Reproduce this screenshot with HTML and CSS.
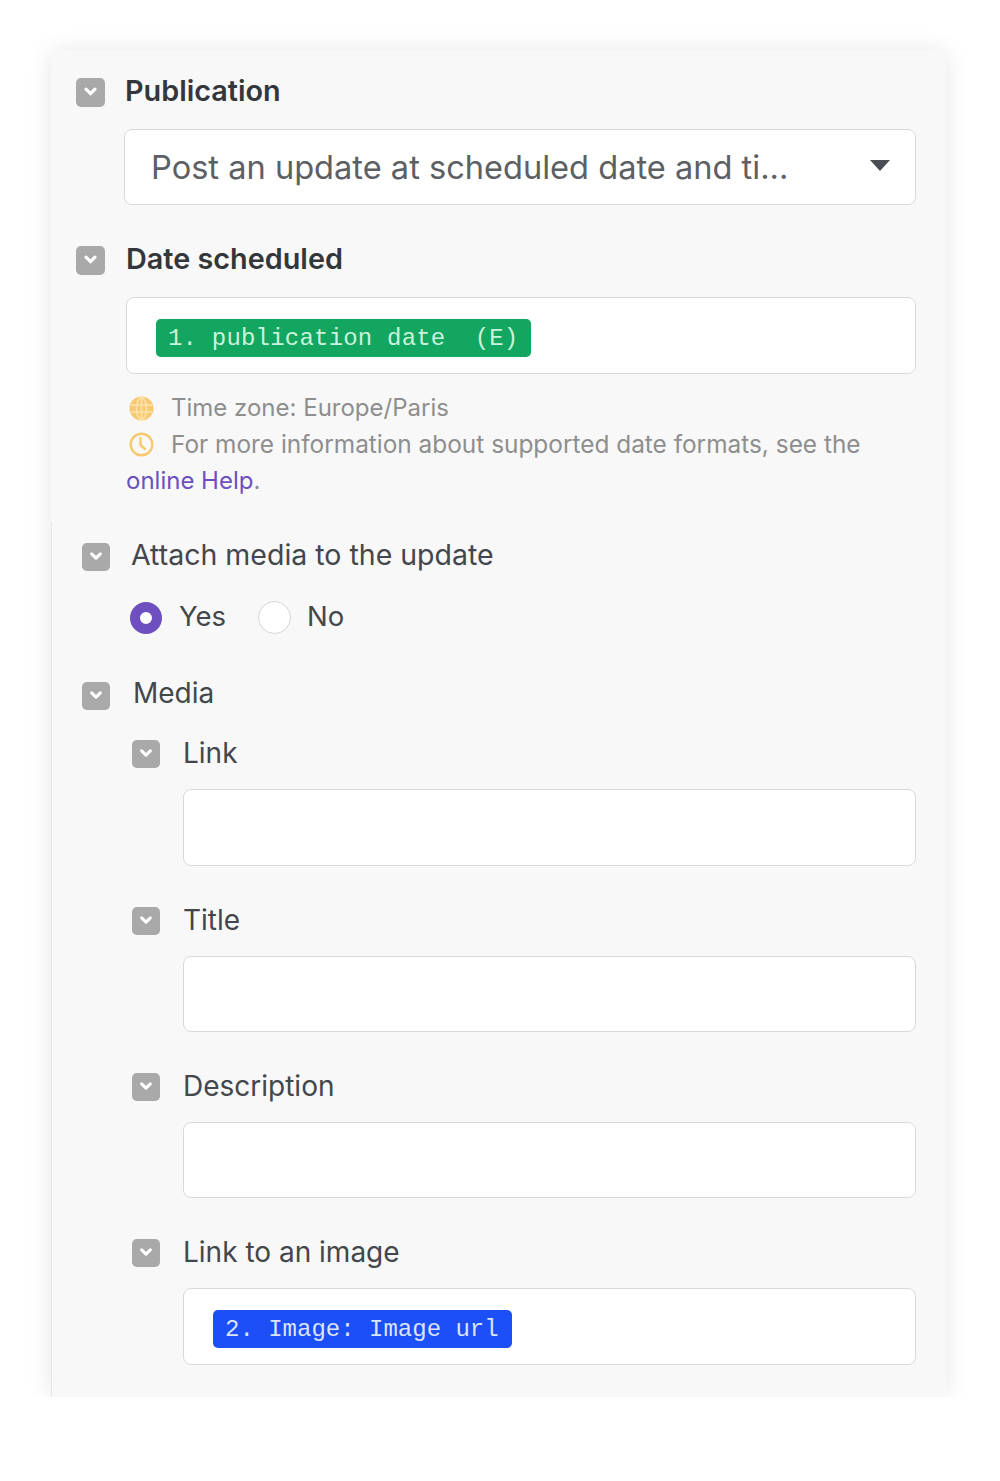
FILE: index.html
```html
<!DOCTYPE html>
<html lang="en">
<head>
    <meta charset="UTF-8">
    <title>Publication settings</title>
    <link rel="stylesheet" href="styles.css">
</head>
<body>
    <svg class="sprite" width="0" height="0">
        <symbol id="toggle" viewBox="0 0 29 29">
            <rect width="29" height="29" rx="5" fill="#a9a9a9"/>
            <path d="M10 11.2l4.5 4.5 4.5-4.5" fill="none" stroke="#fff" stroke-width="3.2" stroke-linecap="round" stroke-linejoin="round"/>
        </symbol>
    </svg>

    <div class="panel">
        <div class="panel-top">
            <div class="head">
                <svg class="toggle"><use href="#toggle"/></svg>
                <span class="label bold">Publication</span>
            </div>
            <div class="select-wrap">
                <div class="box select">
                    <span class="select-text">Post an update at scheduled date and ti...</span>
                    <span class="caret"></span>
                </div>
            </div>

            <div class="head head-date">
                <svg class="toggle"><use href="#toggle"/></svg>
                <span class="label bold">Date scheduled</span>
            </div>
            <div class="date-wrap">
                <div class="box chip-box">
                    <span class="chip chip-green">1. publication date&nbsp; (E)</span>
                </div>
                <div class="notes">
                    <div class="note note-zone">
                        <svg class="note-icon" viewBox="0 0 25 25" fill="none" stroke="#fbe3ae" stroke-width="1.6">
                            <circle cx="12.5" cy="12.5" r="12" fill="#f8c96f" stroke="none"/>
                            <ellipse cx="12.5" cy="12.5" rx="5" ry="11"/>
                            <path d="M2 9h21M2 16h21M12.5 1.5v22"/>
                        </svg>
                        <span>Time zone: Europe/Paris</span>
                    </div>
                    <div class="note note-formats">
                        <svg class="note-icon" viewBox="0 0 25 25" fill="none" stroke="#f8c96f" stroke-width="2.4">
                            <circle cx="12.5" cy="12.5" r="10.8"/>
                            <path d="M11.5 6v7l4.5 4" stroke-linecap="round" stroke-linejoin="round"/>
                        </svg>
                        <span>For more information about supported date formats, see the</span>
                    </div>
                    <div class="note-end"><a class="help" href="#">online Help</a>.</div>
                </div>
            </div>
        </div>

        <div class="panel-lower">
            <div class="head head-attach">
                <svg class="toggle toggle-small"><use href="#toggle"/></svg>
                <span class="label label-main">Attach media to the update</span>
            </div>
            <div class="radios">
                <span class="radio radio-on"></span>
                <span class="label radio-yes">Yes</span>
                <span class="radio"></span>
                <span class="label radio-no">No</span>
            </div>

            <div class="head head-media">
                <svg class="toggle toggle-small"><use href="#toggle"/></svg>
                <span class="label label-media">Media</span>
            </div>
            <div class="media-fields">
                <div class="field">
                    <div class="head sub-head">
                        <svg class="toggle toggle-small"><use href="#toggle"/></svg>
                        <span class="label">Link</span>
                    </div>
                    <div class="box tall"></div>
                </div>
                <div class="field">
                    <div class="head sub-head">
                        <svg class="toggle toggle-small"><use href="#toggle"/></svg>
                        <span class="label">Title</span>
                    </div>
                    <div class="box"></div>
                </div>
                <div class="field">
                    <div class="head sub-head">
                        <svg class="toggle toggle-small"><use href="#toggle"/></svg>
                        <span class="label">Description</span>
                    </div>
                    <div class="box"></div>
                </div>
                <div class="field">
                    <div class="head sub-head">
                        <svg class="toggle toggle-small"><use href="#toggle"/></svg>
                        <span class="label">Link to an image</span>
                    </div>
                    <div class="box tall chip-box">
                        <span class="chip chip-blue">2. Image: Image url</span>
                    </div>
                </div>
            </div>
        </div>
    </div>
</body>
</html>
```

FILE: styles.css
```css
:root {
    --panel-bg: #f8f8f8;
    --text-color: #43474b;
    --border-color: #d9d9d9;
    --note-color: #8e8e8e;
    --purple: #6d4fc0;
}

body {
    margin: 0;
    background: #ffffff;
    font-family: Inter, "Noto Sans", sans-serif;
    color: var(--text-color);
}

.sprite {
    display: block;
}

.panel {
    width: 895px;
    height: 1347px;
    margin: 50px 0 0 51px;
    background: var(--panel-bg);
    border-radius: 6px;
    box-shadow: 0 1px 24px rgba(0, 0, 0, 0.1);
    box-sizing: border-box;
}

.panel-top {
    height: 472px;
    padding: 28px 30px 0 25px;
    box-sizing: border-box;
}

.panel-lower {
    height: 875px;
    padding: 20px 30px 0 30px;
    border-left: 1px solid #e6e6e6;
    box-sizing: border-box;
}

.head {
    display: flex;
    align-items: center;
    gap: 20px;
    height: 29px;
}

.toggle {
    flex: none;
    width: 29px;
    height: 29px;
}

.toggle-small {
    width: 28px;
    height: 28px;
}

.label {
    margin-bottom: 4px;
    font-size: 28px;
    line-height: 29px;
    white-space: nowrap;
}

.label-main {
    font-size: 28.5px;
}

.bold {
    font-size: 28.8px;
    font-weight: 600;
    color: #33373b;
}

.box {
    box-sizing: border-box;
    height: 76px;
    background: #ffffff;
    border: 1px solid var(--border-color);
    border-radius: 8px;
}

.box.tall {
    height: 77px;
}

.select-wrap {
    margin: 22px 0 0 48px;
}

.select {
    display: flex;
    align-items: center;
    justify-content: space-between;
    padding: 0 25px 0 26px;
}

.select-text {
    font-size: 32.6px;
    color: #5c6064;
}

.caret {
    width: 0;
    height: 0;
    margin-bottom: 3px;
    border-left: 10px solid transparent;
    border-right: 10px solid transparent;
    border-top: 11px solid #4a4d52;
}

.head-date {
    margin-top: 41px;
    gap: 21px;
}

.date-wrap {
    margin: 22px 0 0 50px;
}

.date-wrap .box {
    height: 77px;
}

.chip-box {
    display: flex;
    align-items: center;
    padding: 5px 0 0 29px;
}

.chip {
    padding: 0 13px 0 12px;
    height: 38px;
    line-height: 39px;
    border-radius: 5px;
    font-family: "Liberation Mono", monospace;
    font-size: 24px;
    white-space: pre;
}

.chip-green {
    background: #13a660;
    box-shadow: 0 0 1px #7fe0b4;
    color: #c9f3dd;
    letter-spacing: 0.2px;
}

.chip-blue {
    background: #1c4ff6;
    color: #dbe4ff;
}

.notes {
    margin-top: 16px;
    font-size: 24px;
    line-height: 37px;
    color: var(--note-color);
}

.note {
    display: flex;
    align-items: center;
    gap: 17px;
    margin-left: 3px;
    line-height: 36px;
    white-space: nowrap;
}

.note-formats {
    font-size: 24.4px;
}

.note-icon {
    flex: none;
    width: 25px;
    height: 25px;
}

.help {
    color: var(--purple);
    text-decoration: none;
}

.head-attach {
    gap: 21px;
}

.radios {
    display: flex;
    align-items: center;
    margin: 30px 0 0 48px;
}

.radio {
    box-sizing: border-box;
    flex: none;
    width: 33px;
    height: 33px;
    background: #ffffff;
    border: 1px solid #d5d5d5;
    border-radius: 50%;
}

.radio-on {
    width: 32px;
    height: 32px;
    border: 10px solid var(--purple);
}

.radio-yes {
    margin: 0 32px 2px 17px;
    font-size: 27.5px;
}

.radio-no {
    margin: 0 0 2px 16px;
    font-size: 27.5px;
}

.head-media {
    margin-top: 47px;
    gap: 23px;
}

.label-media {
    font-size: 28px;
}

.media-fields {
    display: flex;
    flex-direction: column;
    gap: 40px;
    margin: 29px 0 0 50px;
}

.sub-head {
    gap: 23px;
    margin-bottom: 21px;
}

.sub-head .label {
    margin-bottom: 1px;
}

.field .box {
    margin-left: 51px;
    width: 733px;
}
```
